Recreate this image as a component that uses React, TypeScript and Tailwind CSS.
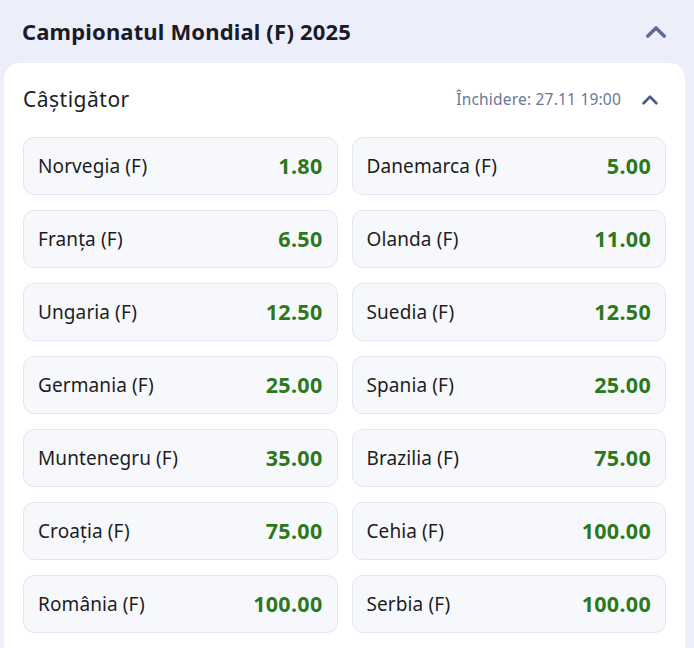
import React from "react";

const rows: [string, string, string, string][] = [
  ["Norvegia (F)", "1.80", "Danemarca (F)", "5.00"],
  ["Franța (F)", "6.50", "Olanda (F)", "11.00"],
  ["Ungaria (F)", "12.50", "Suedia (F)", "12.50"],
  ["Germania (F)", "25.00", "Spania (F)", "25.00"],
  ["Muntenegru (F)", "35.00", "Brazilia (F)", "75.00"],
  ["Croația (F)", "75.00", "Cehia (F)", "100.00"],
  ["România (F)", "100.00", "Serbia (F)", "100.00"],
  ["", "", "", ""],
];

function Chevron({ className, strokeWidth }: { className: string; strokeWidth: number }) {
  return (
    <svg viewBox="0 0 24 24" className={className} fill="none" stroke="currentColor" strokeWidth={strokeWidth} strokeLinecap="round" strokeLinejoin="round">
      <path d="M5 15.5 L12 8.5 L19 15.5" />
    </svg>
  );
}

function Odd({ name, price }: { name: string; price: string }) {
  return (
    <div className="flex h-[58px] items-center justify-between rounded-[11px] border border-[#e3e5f4] bg-[#f7f8fc] pl-[14px] pr-[14px]">
      <span className="text-[19px] tracking-[0.1px] text-[#1d1d22]">{name}</span>
      <span className="text-[21.5px] font-bold tracking-[0.3px] text-[#2d781d]">{price}</span>
    </div>
  );
}

export default function App() {
  return (
    <div className="h-[648px] overflow-hidden bg-[#eceef9]" style={{ fontFamily: '"Noto Sans", "Open Sans", sans-serif' }}>
      <div className="flex h-[63px] items-center justify-between pl-[22px] pr-[24px]">
        <h1 className="text-[22px] font-bold tracking-[0.15px] text-[#1a1b26]">Campionatul Mondial (F) 2025</h1>
        <Chevron className="h-[28px] w-[28px] text-[#5b6a92]" strokeWidth={3} />
      </div>
      <div className="ml-[4px] mr-[9px] rounded-t-[15px] bg-white px-[19px]">
        <div className="flex h-[74px] items-center justify-between">
          <span className="text-[21px] tracking-[0.5px] text-[#1d1d22]">Câștigător</span>
          <div className="flex items-center gap-[18px] pr-[5px]">
            <span className="text-[15.5px] tracking-[0.2px] text-[#6b7697]">Închidere: 27.11 19:00</span>
            <Chevron className="h-[22px] w-[22px] text-[#4f5d86]" strokeWidth={3} />
          </div>
        </div>
        <div className="grid grid-cols-2 gap-x-[14px] gap-y-[15px]">
          {rows.map((r, i) => (
            <React.Fragment key={i}>
              <Odd name={r[0]} price={r[1]} />
              <Odd name={r[2]} price={r[3]} />
            </React.Fragment>
          ))}
        </div>
      </div>
    </div>
  );
}
